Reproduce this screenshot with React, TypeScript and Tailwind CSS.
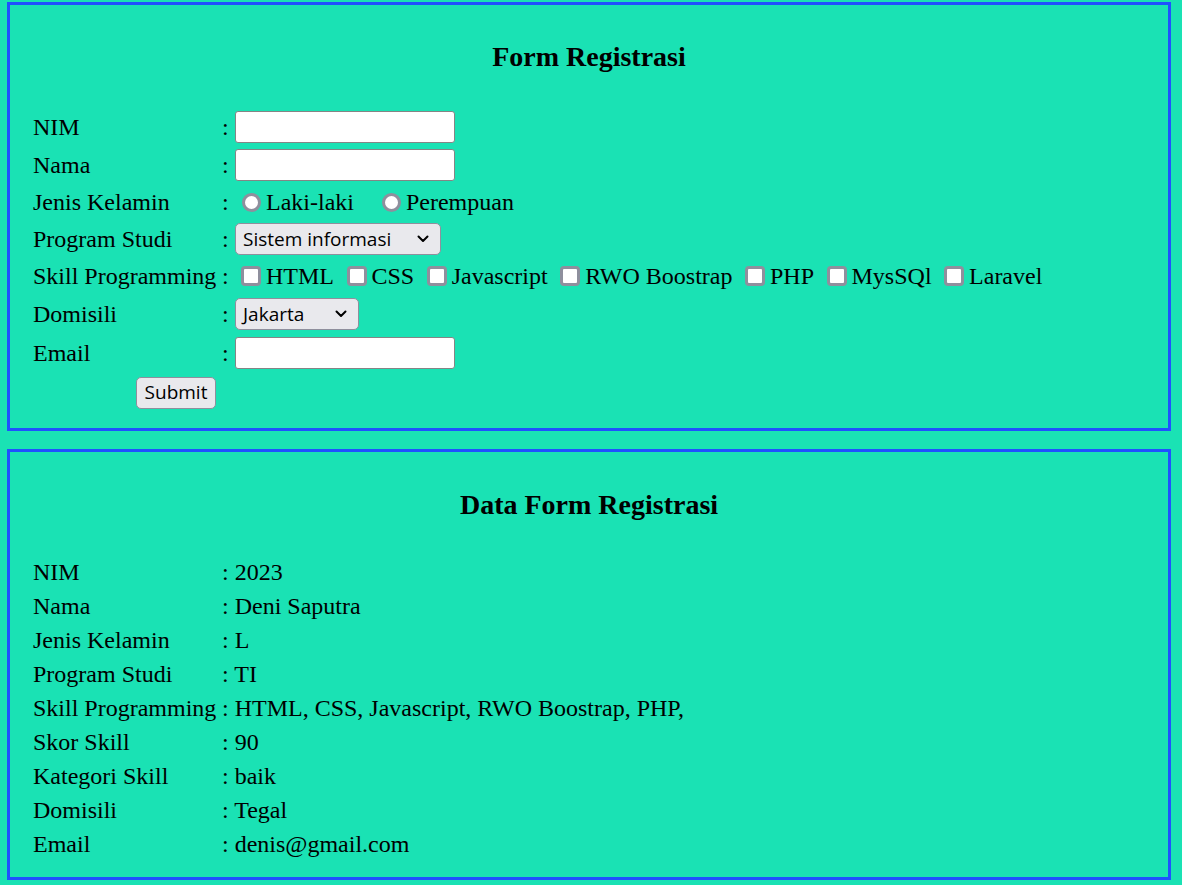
import React from 'react';

const serif = { fontFamily: '"Liberation Serif", "Times New Roman", serif' };

function Chevron() {
  return (
    <svg width="12" height="8" viewBox="0 0 12 8" className="shrink-0">
      <path d="M1.5 1.5 L6 6 L10.5 1.5" fill="none" stroke="#000" strokeWidth="2" strokeLinecap="round" strokeLinejoin="round" />
    </svg>
  );
}

function TextBox() {
  return <div className="w-[220px] h-[32px] bg-white border border-[#858585] rounded-[3px]" />;
}

function Select({ value, width }: { value: string; width: string }) {
  return (
    <div className={`${width} h-[32px] bg-[#e9e9ed] border border-[#8f8f9d] rounded-[5px] flex items-center justify-between pl-[7px] pr-[11px] font-['Open_Sans',sans-serif] text-[19px] text-black`}>
      <span className="leading-none">{value}</span>
      <Chevron />
    </div>
  );
}

function Radio({ label, ml }: { label: string; ml: string }) {
  return (
    <div className={`flex items-center ${ml}`}>
      <span className="w-[19px] h-[19px] rounded-full border-[3px] border-[#8f8f9d] bg-white" />
      <span className="ml-[5px]">{label}</span>
    </div>
  );
}

function Check({ label, first }: { label: string; first?: boolean }) {
  return (
    <div className={`flex items-center ${first ? 'ml-[6px]' : 'ml-[12.5px]'}`}>
      <span className="w-[20px] h-[20px] rounded-[4px] border-[3px] border-[#8f8f9d] bg-white" />
      <span className="ml-[5px]">{label}</span>
    </div>
  );
}

function Row({ label, h, children }: { label: string; h: string; children: React.ReactNode }) {
  return (
    <div className={`flex items-center ${h}`}>
      <div className="w-[189px] whitespace-nowrap">{label}</div>
      <div className="w-[13px]">:</div>
      <div className="flex items-center">{children}</div>
    </div>
  );
}

const data: [string, string][] = [
  ['NIM', '2023'],
  ['Nama', 'Deni Saputra'],
  ['Jenis Kelamin', 'L'],
  ['Program Studi', 'TI'],
  ['Skill Programming', 'HTML, CSS, Javascript, RWO Boostrap, PHP,'],
  ['Skor Skill', '90'],
  ['Kategori Skill', 'baik'],
  ['Domisili', 'Tegal'],
  ['Email', 'denis@gmail.com'],
];

export default function App() {
  return (
    <div className="min-h-[885px] bg-[#1ae2b4] pt-[2px] text-black text-[24px] leading-[27px]" style={serif}>
      <div className="ml-[7px] w-[1164px] border-[3px] border-[#1f51ff] pt-[36px] pb-[16px] pl-[23px]">
        <h3 className="h-[32px] leading-[32px] text-[28px] font-bold text-center mb-[35px] -ml-[23px]">Form Registrasi</h3>
        <Row label="NIM" h="h-[38px]"><TextBox /></Row>
        <Row label="Nama" h="h-[38px]"><TextBox /></Row>
        <Row label="Jenis Kelamin" h="h-[37px]">
          <Radio label="Laki-laki" ml="ml-[7px]" />
          <Radio label="Perempuan" ml="ml-[28px]" />
        </Row>
        <Row label="Program Studi" h="h-[36px]"><Select value="Sistem informasi" width="w-[206px]" /></Row>
        <Row label="Skill Programming" h="h-[38px]">
          <Check label="HTML" first />
          <Check label="CSS" />
          <Check label="Javascript" />
          <Check label="RWO Boostrap" />
          <Check label="PHP" />
          <Check label="MysSQl" />
          <Check label="Laravel" />
        </Row>
        <Row label="Domisili" h="h-[38px]"><Select value="Jakarta" width="w-[124px]" /></Row>
        <Row label="Email" h="h-[40px]"><TextBox /></Row>
        <div className="flex items-center h-[39px]">
          <div className="w-[183px] flex justify-end">
            <button className="w-[80px] h-[32px] bg-[#e9e9ed] border border-[#8f8f9d] rounded-[5px] font-['Open_Sans',sans-serif] text-[19px] leading-none text-black">Submit</button>
          </div>
        </div>
      </div>

      <div className="ml-[7px] mt-[18px] w-[1164px] border-[3px] border-[#1f51ff] pt-[37px] pb-[16px] pl-[23px]">
        <h3 className="h-[32px] leading-[32px] text-[28px] font-bold text-center mb-[34px] -ml-[23px]">Data Form Registrasi</h3>
        {data.map(([k, v]) => (
          <div key={k} className="flex items-center h-[34px]">
            <div className="w-[189px] whitespace-nowrap">{k}</div>
            <div className="whitespace-nowrap">: {v}</div>
          </div>
        ))}
      </div>
    </div>
  );
}
